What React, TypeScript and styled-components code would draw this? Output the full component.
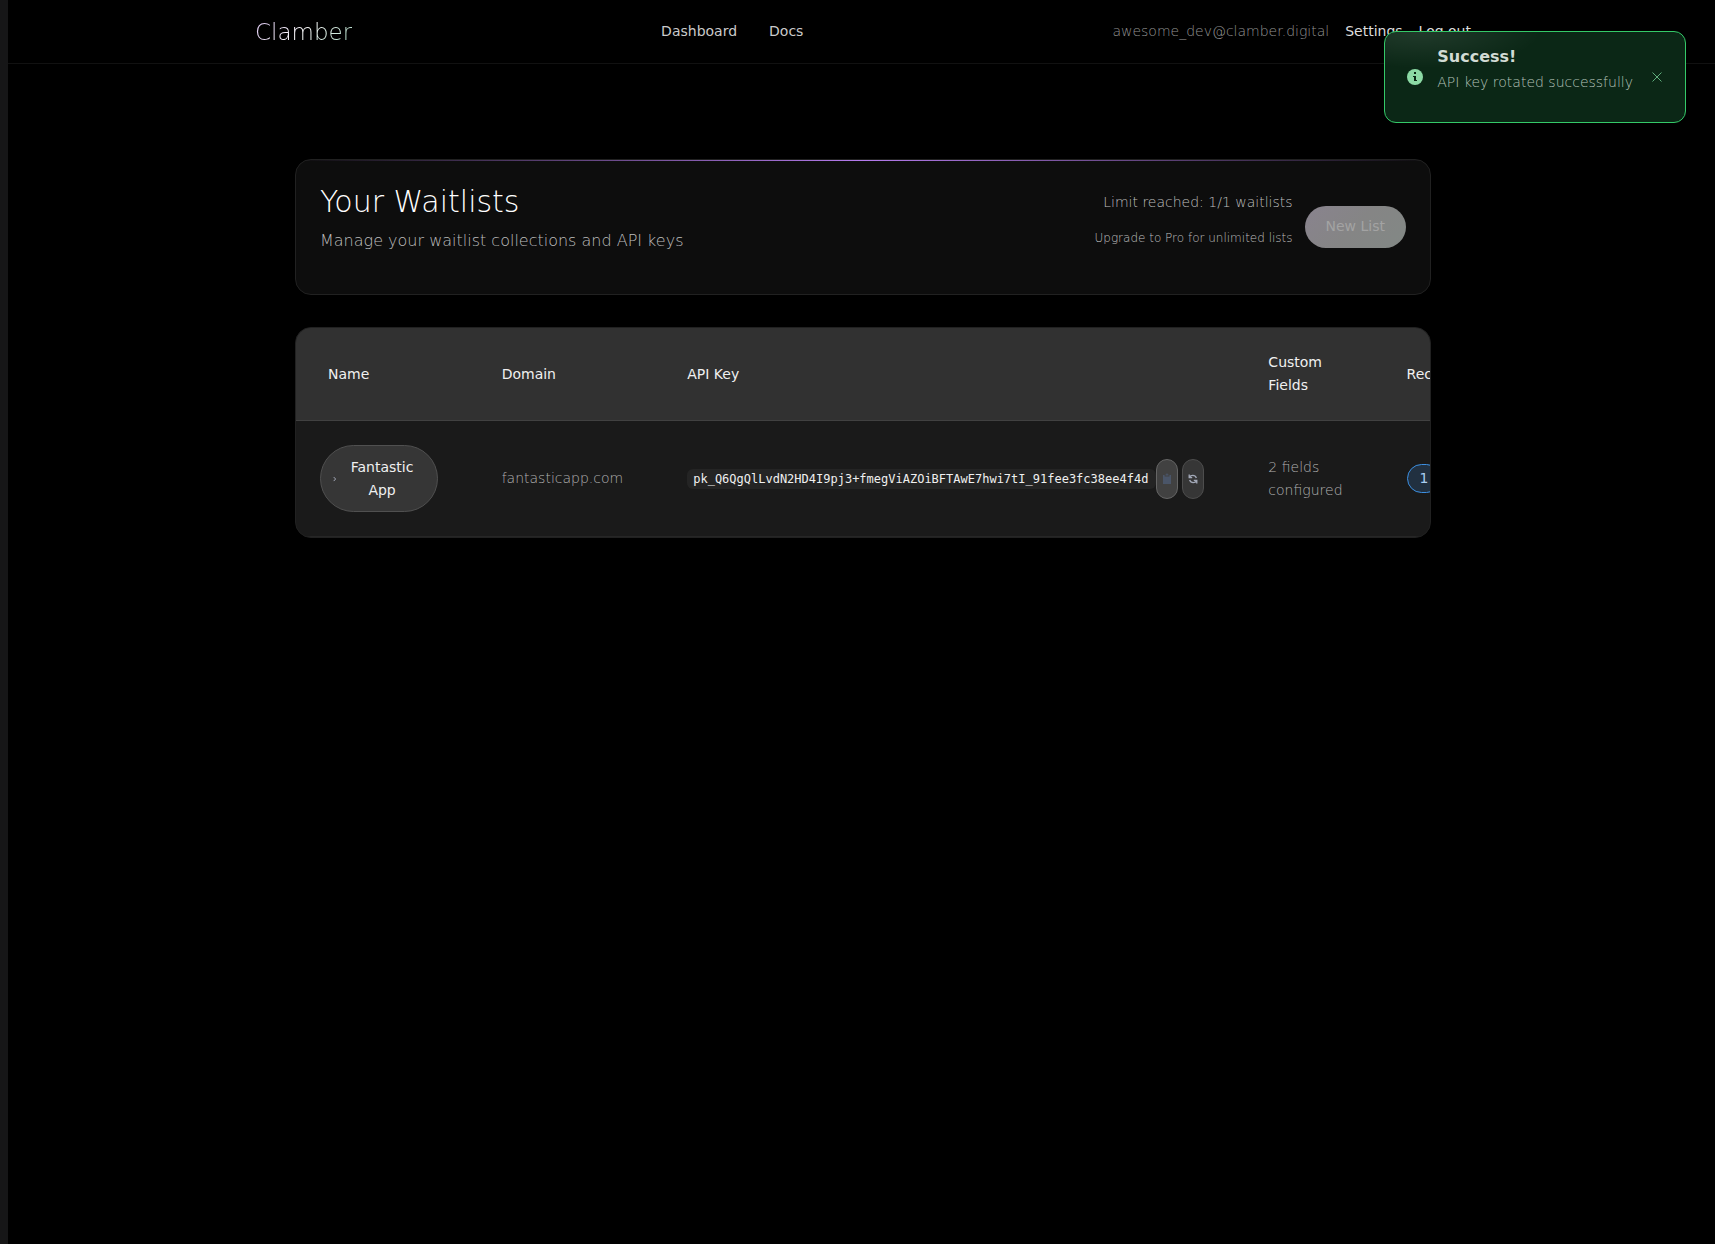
import React from "react";
import styled, { createGlobalStyle, css } from "styled-components";

const GlobalStyle = createGlobalStyle`
  *, *::before, *::after { box-sizing: border-box; }
  body {
    margin: 0;
    background: #000;
    color: #ededed;
    font-family: "DejaVu Sans", Verdana, sans-serif;
    font-size: 14px;
    line-height: 23px;
  }
  p, h1, h2 { margin: 0; }
  button { font: inherit; color: inherit; cursor: pointer; }
`;

const Shell = styled.div`
  min-height: 100vh;
  border-left: 8px solid #161617;
  padding-left: 3px;
`;

const TopBar = styled.header`
  height: 64px;
  margin-left: -3px;
  padding-left: 3px;
  border-bottom: 1px solid #111;
`;

const TopBarInner = styled.div`
  max-width: 1280px;
  height: 100%;
  margin: 0 auto;
  padding: 0 32px;
  display: flex;
  align-items: center;
  justify-content: space-between;
`;

const Brand = styled.a`
  font-size: 23px;
  line-height: 32px;
  font-weight: 200;
  text-decoration: none;
  color: transparent;
  background: linear-gradient(135deg, #dcc4f2 0%, #ffffff 50%, #a5d8c0 100%);
  background-clip: text;
`;

const LinkGroup = styled.nav<{ $gap: number }>`
  display: flex;
  align-items: center;
  gap: ${(p) => p.$gap}px;
`;

const NavLink = styled.a<{ $bright?: boolean }>`
  color: ${(p) => (p.$bright ? "#dcdcdc" : "#cacaca")};
  text-decoration: none;
`;

const Email = styled.span`
  font-weight: 200;
  color: #929292;
`;

const Content = styled.main`
  max-width: 1200px;
  margin: 0 auto;
  padding: 95px 32px 32px;
  display: flex;
  flex-direction: column;
  gap: 32px;
`;

const cardFrame = css`
  border: 1px solid #212121;
  border-radius: 16px;
  overflow: hidden;
`;

const HeroCard = styled.section`
  ${cardFrame}
  position: relative;
  background: #0d0d0d;
  padding: 24px;
  display: flex;
  justify-content: space-between;
  align-items: center;

  &::before {
    content: "";
    position: absolute;
    inset: 0 0 auto;
    height: 1px;
    background: linear-gradient(90deg, transparent, #b57bee, transparent);
  }
`;

const Title = styled.h1`
  font-size: 30px;
  line-height: 36px;
  font-weight: 200;
  margin-bottom: 8px;
  color: #fff;
`;

const Subtitle = styled.p`
  font-size: 16px;
  line-height: 26px;
  font-weight: 200;
  margin-bottom: 16px;
  color: #bdbdbd;
`;

const Actions = styled.div`
  display: flex;
  align-items: center;
  gap: 12px;
`;

const Limit = styled.div`
  text-align: right;
  font-weight: 200;
  color: #bdbdbd;
`;

const LimitLine = styled.p`
  margin-bottom: 14px;
`;

const UpgradeLine = styled.p`
  font-size: 12px;
  line-height: 20px;
  margin-bottom: 16px;
`;

const PrimaryButton = styled.button`
  padding: 9px 21px 10px;
  border: 0;
  border-radius: 21px;
  color: #a3a3a3;
  background: linear-gradient(135deg, #89838e, #858585 50%, #828885);
  &:disabled { cursor: not-allowed; }
`;

const TableCard = styled.section`
  ${cardFrame}
  background: #1a1a1a;
`;

const Table = styled.table`
  width: 100%;
  border-collapse: separate;
  border-spacing: 0;
`;

const HeadCell = styled.th`
  padding: 23px 32px;
  text-align: left;
  font-weight: 400;
  color: #f0f0f0;
  background: #313131;
  border-bottom: 1px solid #414141;
`;

const Cell = styled.td`
  padding: 24px 32px;
  font-weight: 200;
  color: #b0b0b0;
  border-bottom: 1px solid #262626;
`;

const NameButton = styled.button`
  display: flex;
  align-items: center;
  gap: 12px;
  margin-left: -8px;
  padding: 10px 22px 9px 11px;
  border: 1px solid #505050;
  border-radius: 34px;
  background: #363636;
  color: #f0f0f0;
  font-weight: 400;
  text-align: center;
`;

const KeyRow = styled.div`
  display: flex;
  align-items: center;
  white-space: nowrap;
`;

const KeyCode = styled.code`
  padding: 0 8px 0 6px;
  border-radius: 6px;
  background: #242424;
  color: #f0f0f0;
  font-family: "DejaVu Sans Mono", monospace;
  font-size: 12px;
  font-weight: 400;
  line-height: 20px;
`;

const IconButton = styled.button<{ $active?: boolean }>`
  width: 22px;
  height: 40px;
  padding: 0;
  display: grid;
  place-items: center;
  border: 1px solid ${(p) => (p.$active ? "#656565" : "#4d4d4d")};
  border-radius: 11px;
  background: ${(p) => (p.$active ? "#414141" : "#363636")};
  color: ${(p) => (p.$active ? "#4a5568" : "#a3a9b8")};
  & + & { margin-left: 4px; }
`;

const Pill = styled.span`
  display: inline-block;
  padding: 3px 12px;
  border: 1px solid #3d8fe0;
  border-radius: 15px;
  line-height: 21px;
  font-weight: 400;
  color: #a9cdf0;
  background: #213040;
  white-space: nowrap;
  vertical-align: middle;
`;

const Toast = styled.aside`
  position: fixed;
  top: 31px;
  right: 29px;
  display: flex;
  align-items: center;
  padding: 11px 22px;
  border: 1px solid #34c968;
  border-radius: 12px;
  background:
    radial-gradient(120px 36px at 36px 0, rgba(255, 255, 255, 0.09), transparent),
    #0b2716;
`;

const ToastBody = styled.div`
  margin: 0 18px 0 14px;
`;

const ToastTitle = styled.h2`
  font-size: 16px;
  line-height: 28px;
  font-weight: 700;
  color: #d2dbd4;
`;

const ToastText = styled.p`
  font-weight: 200;
  margin-bottom: 17px;
  color: #b2c1b7;
`;

const CloseButton = styled.button`
  display: grid;
  padding: 0;
  border: 0;
  background: none;
  color: #5fae7c;
`;

const InfoIcon = () => (
  <svg width="16" height="16" viewBox="0 0 16 16" aria-hidden="true">
    <circle cx="8" cy="8" r="8" fill="#8cdaa5" />
    <path d="M7 3h2v2H7zM6 7h3v4h1v1H7V8H6z" fill="#0b2716" />
  </svg>
);

const CloseIcon = () => (
  <svg width="12" height="12" viewBox="0 0 12 12" stroke="currentColor" aria-hidden="true">
    <path d="M1.5 1.5l9 9M10.5 1.5l-9 9" />
  </svg>
);

const ChevronIcon = () => (
  <svg width="8" height="10" viewBox="0 0 8 10" fill="none" stroke="#a8adbd" strokeWidth="1.4" aria-hidden="true">
    <path d="M2.5 2.2L5.2 5 2.5 8" />
  </svg>
);

const ClipboardIcon = () => (
  <svg width="10" height="12" viewBox="0 0 10 12" fill="currentColor" aria-hidden="true">
    <path d="M1 2h1.6v1.6h4.8V2H9v9H1zM3.6 1.2h.8v-.6h1.2v.6h.8v1.4H3.6z" />
  </svg>
);

const RotateIcon = () => (
  <svg width="10" height="12" viewBox="0 0 10 12" fill="none" stroke="currentColor" strokeWidth="1.3" aria-hidden="true">
    <path d="M1.2 1.4v3.2h3M1.4 4.4C2.6 2 7 1.4 8.4 5M8.8 10.6V7.4h-3M8.6 7.6C7.4 10 3 10.6 1.6 7" />
  </svg>
);

const columns = ["Name", "Domain", "API Key", "Custom Fields", "Recipients"];

export default function App() {
  return (
    <>
      <GlobalStyle />
      <Shell>
        <TopBar>
          <TopBarInner>
            <Brand href="#">Clamber</Brand>
            <LinkGroup $gap={32} aria-label="Main">
              <NavLink href="#dashboard">Dashboard</NavLink>
              <NavLink href="#docs">Docs</NavLink>
            </LinkGroup>
            <LinkGroup $gap={16} aria-label="Account">
              <Email>awesome_dev@clamber.digital</Email>
              <NavLink $bright href="#settings">Settings</NavLink>
              <NavLink $bright href="#logout">Log out</NavLink>
            </LinkGroup>
          </TopBarInner>
        </TopBar>

        <Content>
          <HeroCard>
            <div>
              <Title>Your Waitlists</Title>
              <Subtitle>Manage your waitlist collections and API keys</Subtitle>
            </div>
            <Actions>
              <Limit>
                <LimitLine>Limit reached: 1/1 waitlists</LimitLine>
                <UpgradeLine>Upgrade to Pro for unlimited lists</UpgradeLine>
              </Limit>
              <PrimaryButton disabled>New List</PrimaryButton>
            </Actions>
          </HeroCard>

          <TableCard>
            <Table>
              <thead>
                <tr>
                  {columns.map((name) => (
                    <HeadCell key={name} scope="col">{name}</HeadCell>
                  ))}
                </tr>
              </thead>
              <tbody>
                <tr>
                  <Cell>
                    <NameButton>
                      <ChevronIcon />
                      <span>Fantastic App</span>
                    </NameButton>
                  </Cell>
                  <Cell>fantasticapp.com</Cell>
                  <Cell>
                    <KeyRow>
                      <KeyCode>pk_Q6QgQlLvdN2HD4I9pj3+fmegViAZOiBFTAwE7hwi7tI_91fee3fc38ee4f4d</KeyCode>
                      <IconButton $active aria-label="Copy API key"><ClipboardIcon /></IconButton>
                      <IconButton aria-label="Rotate API key"><RotateIcon /></IconButton>
                    </KeyRow>
                  </Cell>
                  <Cell>2 fields configured</Cell>
                  <Cell><Pill>1</Pill></Cell>
                </tr>
              </tbody>
            </Table>
          </TableCard>
        </Content>

        <Toast role="status">
          <InfoIcon />
          <ToastBody>
            <ToastTitle>Success!</ToastTitle>
            <ToastText>API key rotated successfully</ToastText>
          </ToastBody>
          <CloseButton aria-label="Dismiss"><CloseIcon /></CloseButton>
        </Toast>
      </Shell>
    </>
  );
}
